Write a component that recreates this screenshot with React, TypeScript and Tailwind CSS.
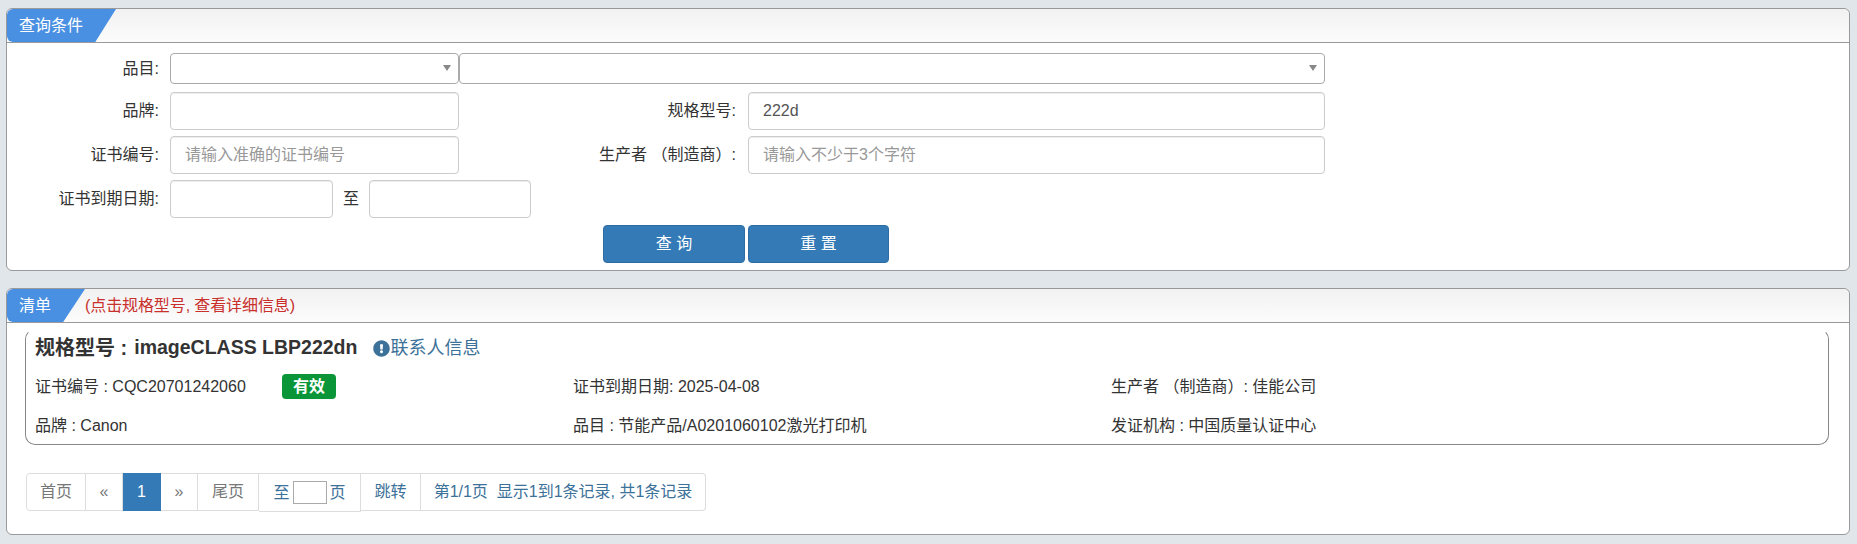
import { FaExclamationCircle } from "react-icons/fa";

const inputClass =
  "h-full rounded-[4px] border border-[#ccc] bg-white px-[14px] text-[16px] text-[#555] shadow-[inset_0_1px_1px_rgba(0,0,0,0.075)] outline-none placeholder:text-[#999]";

function Panel({
  title,
  tabClass,
  note,
  children,
  className,
}: {
  title: string;
  tabClass: string;
  note?: string;
  children: React.ReactNode;
  className: string;
}) {
  return (
    <section
      className={`ml-[6px] mr-[7px] rounded-[6px] border border-[#999] bg-white ${className}`}
    >
      <div className="flex h-[34px] rounded-t-[6px] border-b border-[#999] bg-gradient-to-b from-[#f1f1f1] to-[#fcfcfc]">
        <div
          className={`flex h-[33px] items-center rounded-tl-[6px] rounded-bl-[6px] bg-[#4a90e2] pl-[12px] text-[16px] text-white ${tabClass}`}
        >
          {title}
        </div>
        {note && (
          <span className="flex items-center text-[16px] tracking-[-0.1px] text-[#c9302c]">
            {note}
          </span>
        )}
      </div>
      {children}
    </section>
  );
}

function SelectBox({ className }: { className: string }) {
  return (
    <div
      className={`relative h-full rounded-[4px] border border-[#aaa] bg-white ${className}`}
    >
      <svg
        className="absolute right-[5px] top-[11px]"
        width="12"
        height="7"
        viewBox="0 0 12 7"
      >
        <polygon points="2,0 10,0 6,6" fill="#888" />
      </svg>
    </div>
  );
}

function Label({ children, className }: { children: React.ReactNode; className: string }) {
  return (
    <label className={`shrink-0 text-right text-[16px] text-[#333] ${className}`}>
      {children}
    </label>
  );
}

function PageCell({
  children,
  className,
}: {
  children: React.ReactNode;
  className: string;
}) {
  return (
    <div
      className={`flex items-center justify-center border-y border-r text-[16px] ${className}`}
    >
      {children}
    </div>
  );
}

export default function App() {
  return (
    <div className="h-[544px] overflow-hidden bg-[#e1e6ea] pt-[8px] font-['Liberation_Sans','Noto_Sans_CJK_SC',sans-serif]">
      {/* 查询条件 */}
      <Panel
        title="查询条件"
        className="h-[263px]"
        tabClass="w-[109px] [clip-path:polygon(0_0,100%_0,81%_100%,0_100%)]"
      >
        <div className="pt-[10px]">
          <div className="flex h-[31px] items-center">
            <Label className="w-[152px]">品目:</Label>
            <SelectBox className="ml-[11px] w-[289px]" />
            <SelectBox className="w-[866px]" />
          </div>
          <div className="mt-[8px] flex h-[38px] items-center">
            <Label className="w-[152px]">品牌:</Label>
            <input className={`${inputClass} ml-[11px] w-[289px]`} />
            <Label className="w-[277px]">规格型号:</Label>
            <input
              className={`${inputClass} ml-[12px] w-[577px]`}
              defaultValue="222d"
            />
          </div>
          <div className="mt-[6px] flex h-[38px] items-center">
            <Label className="w-[152px]">证书编号:</Label>
            <input
              className={`${inputClass} ml-[11px] w-[289px]`}
              placeholder="请输入准确的证书编号"
            />
            <Label className="w-[277px]">生产者 （制造商）:</Label>
            <input
              className={`${inputClass} ml-[12px] w-[577px]`}
              placeholder="请输入不少于3个字符"
            />
          </div>
          <div className="mt-[6px] flex h-[38px] items-center">
            <Label className="w-[152px]">证书到期日期:</Label>
            <input className={`${inputClass} ml-[11px] w-[163px]`} />
            <span className="ml-[10px] text-[16px] text-[#333]">至</span>
            <input className={`${inputClass} ml-[10px] w-[162px]`} />
          </div>
          <div className="mt-[7px] flex h-[38px] gap-[3px] pl-[596px]">
            <button className="w-[142px] rounded-[4px] border border-[#2e6da4] bg-[#337ab7] text-[16px] text-white">
              查 询
            </button>
            <button className="w-[141px] rounded-[4px] border border-[#2e6da4] bg-[#337ab7] text-[16px] text-white">
              重 置
            </button>
          </div>
        </div>
      </Panel>

      {/* 清单 */}
      <Panel
        title="清单"
        className="mt-[17px] h-[247px]"
        tabClass="w-[78px] [clip-path:polygon(0_0,100%_0,72%_100%,0_100%)]"
        note="(点击规格型号, 查看详细信息)"
      >
        <div className="ml-[18px] mr-[20px] mt-[6px] h-[116px] rounded-[10px] border border-[#888] border-t-transparent px-[9px]">
          <div className="flex h-[36px] items-center">
            <span className="text-[20px] font-bold text-[#333]">规格型号 :</span>
            <span className="ml-[7px] text-[19.5px] font-bold text-[#333]">
              imageCLASS LBP222dn
            </span>
            <a className="ml-[16px] flex items-center text-[18px] text-[#3c7199]">
              <FaExclamationCircle className="text-[17px]" />
              联系人信息
            </a>
          </div>
          <div className="mt-[7px] grid grid-cols-[538px_538px_1fr] text-[16px] text-[#333]">
            <div className="flex h-[27px] items-center">
              <span className="w-[247px]">证书编号 : CQC20701242060</span>
              <span className="flex h-[25px] w-[54px] items-center justify-center rounded-[4px] bg-[#0a9638] font-bold text-white">
                有效
              </span>
            </div>
            <div className="flex h-[27px] items-center">证书到期日期: 2025-04-08</div>
            <div className="flex h-[27px] items-center">生产者 （制造商）: 佳能公司</div>
            <div className="mt-[12px] flex h-[27px] items-center">品牌 : Canon</div>
            <div className="mt-[12px] flex h-[27px] items-center">
              品目 : 节能产品/A0201060102激光打印机
            </div>
            <div className="mt-[12px] flex h-[27px] items-center">发证机构 : 中国质量认证中心</div>
          </div>
        </div>

        <div className="ml-[19px] mt-[28px] flex w-[680px] items-start">
          <PageCell className="h-[38px] w-[60px] rounded-l-[4px] border-l border-[#ddd] bg-white text-[#777]">首页</PageCell>
          <PageCell className="h-[38px] w-[37px] border-[#ddd] bg-white text-[#777]">«</PageCell>
          <PageCell className="h-[38px] w-[38px] border-[#337ab7] bg-[#337ab7] text-white">1</PageCell>
          <PageCell className="h-[38px] w-[37px] border-[#ddd] bg-white text-[#777]">»</PageCell>
          <PageCell className="h-[38px] w-[61px] border-[#ddd] bg-white text-[#777]">尾页</PageCell>
          <PageCell className="h-[39px] w-[102px] border-[#ddd] bg-white text-[#3c7199]">
            至
            <span className="mx-[3px] h-[23px] w-[34px] border border-[#aaa] bg-white" />
            页
          </PageCell>
          <PageCell className="h-[38px] w-[60px] border-[#ddd] bg-white text-[#3c7199]">跳转</PageCell>
          <PageCell className="h-[38px] w-[285px] rounded-r-[4px] border-[#ddd] bg-white text-[#3c7199]">
            第1/1页&nbsp;&nbsp;显示1到1条记录, 共1条记录
          </PageCell>
        </div>
      </Panel>
    </div>
  );
}
